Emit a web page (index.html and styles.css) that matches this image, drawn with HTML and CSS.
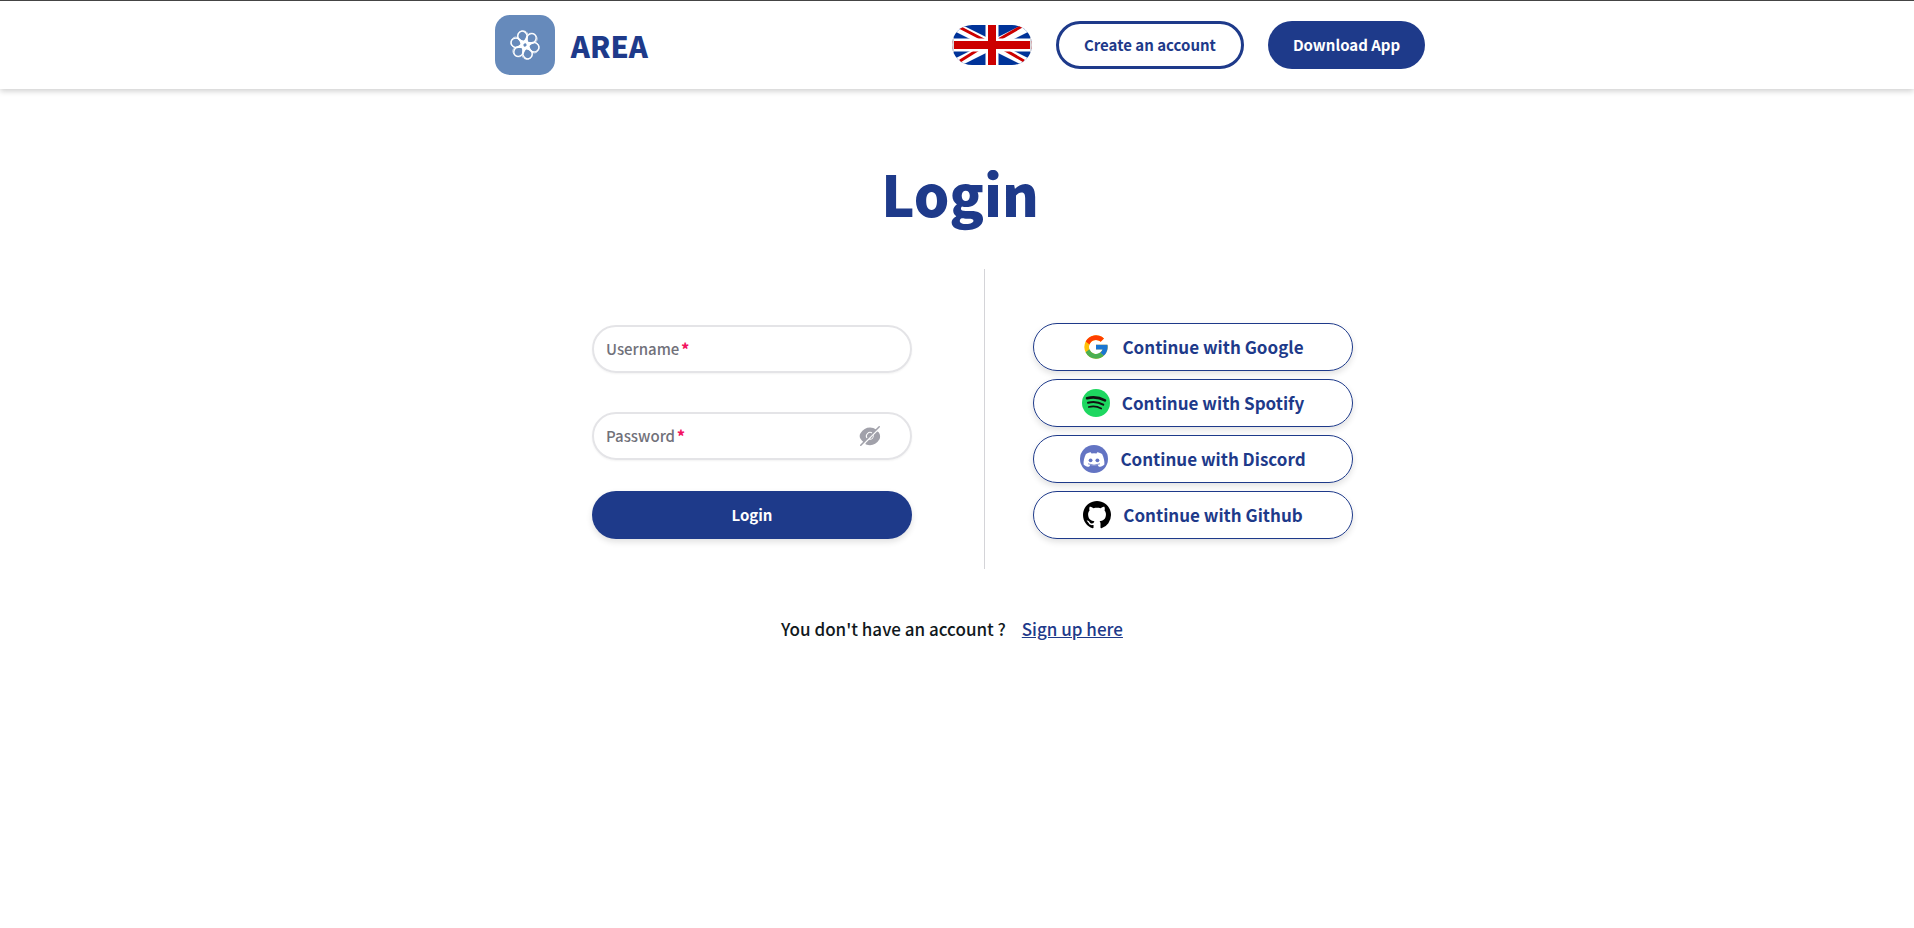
FILE: index.html
```html
<!DOCTYPE html>
<html lang="en">
<head>
<meta charset="utf-8">
<meta name="viewport" content="width=device-width, initial-scale=1">
<title>AREA - Login</title>
<link rel="stylesheet" href="styles.css">
</head>
<body>
<header class="header">
  <a class="brand" href="#">
    <svg class="logo" viewBox="0 0 60 60" aria-hidden="true">
      <rect width="60" height="60" rx="15" fill="#668abb"/>
      <g transform="translate(30 30) rotate(-16)" fill="none" stroke="#fff">
        <g id="petal">
          <ellipse cx="0" cy="-9" rx="4.600" ry="5.200" stroke-width="1.300"/>
          <path d="M-1-2C-8-8-5-15 1-14.500C8-13 6-7 1-2" stroke-width=".7"/>
          <path d="M-2-1L-5-8L0-4.500L5-8L2-1" fill="#fff" stroke="none"/>
        </g>
        <use href="#petal" transform="rotate(60)"/>
        <use href="#petal" transform="rotate(120)"/>
        <use href="#petal" transform="rotate(180)"/>
        <use href="#petal" transform="rotate(240)"/>
        <use href="#petal" transform="rotate(300)"/>
        <circle r="2.600" stroke-width="2" fill="#668abb"/>
      </g>
    </svg>
    <span class="brand-name">AREA</span>
  </a>
  <nav class="actions">
    <button class="language" type="button" aria-label="Language: English">
      <svg class="flag" viewBox="0 0 80 40" aria-hidden="true">
        <defs>
          <clipPath id="pill"><rect width="80" height="40" rx="20"/></clipPath>
        </defs>
        <g clip-path="url(#pill)">
          <path d="M0 0h80v40H0z" fill="#039"/>
          <path d="M0 0l80 40M80 0L0 40" stroke="#fff" stroke-width="9"/>
          <path d="M5 1l27 14M72 0L46 15M8 36l24-15M46 21l26 15" stroke="#c00" stroke-width="3"/>
          <path d="M40 0v40M0 20h80" stroke="#fff" stroke-width="13"/>
          <path d="M40 0v40M0 20h80" stroke="#c00" stroke-width="8"/>
          <path d="M0 0h2v40H0zM78 0h2v40h-2z" fill="#d8d8dc"/>
        </g>
      </svg>
    </button>
    <button class="pill outline" type="button">Create an account</button>
    <button class="pill solid" type="button">Download App</button>
  </nav>
</header>
<main class="page">
  <h1 class="title">Login</h1>
  <div class="methods">
    <form class="credentials">
      <div class="field">
        <label for="username">Username<span class="required">*</span></label>
        <input id="username" type="text" autocomplete="username" required>
      </div>
      <div class="field">
        <label for="password">Password<span class="required">*</span></label>
        <input id="password" type="password" autocomplete="current-password" required>
        <button class="reveal" type="button" aria-label="Show password">
          <svg class="eye" viewBox="0 0 24 24" fill="#a1a1aa" aria-hidden="true">
            <path d="M21.270 9.180c-.29-.46-.6-.89-.92-1.290a.96.96 0 0 0-1.430-.08l-3.260 3.260a3.840 3.840 0 0 1-4.600 4.600L7.800 18.920a.96.96 0 0 0 .28 1.560c1.250.52 2.570.79 3.920.79 3.630 0 7-2.120 9.300-5.730 1.070-1.680 1.050-4.720-.03-6.360z"/>
            <path d="M14.020 9.980l-4.040 4.040a2.860 2.860 0 1 1 4.040-4.040z"/>
            <path d="M18.250 5.750l-3.390 3.390a4.040 4.040 0 1 0-5.720 5.720l-3.380 3.390c-1.200-.84-2.300-1.960-3.260-3.430-1.090-1.680-1.090-4 0-5.680C4.800 5.350 8.300 3.500 12 3.500c2.240 0 4.370.8 6.250 2.250z"/>
            <path d="M14.860 12A2.860 2.860 0 0 1 12 14.860l2.810-3.280z"/>
            <path d="M21.770 2.230a.75.75 0 0 0-1.070 0L2.230 20.690a.77.77 0 0 0 0 1.080.76.76 0 0 0 1.070 0L21.770 3.300a.76.76 0 0 0 0-1.070z"/>
          </svg>
        </button>
      </div>
      <button class="submit" type="submit">Login</button>
    </form>
    <div class="providers">
      <button class="provider" type="button">
        <svg class="icon" viewBox="4 4 48 48" aria-hidden="true">
          <path fill="#ffc107" d="M47.600 24.100H46V24H28v8h11.300A12 12 0 1 1 28 16c3.100 0 5.800 1.200 8 3l5.700-5.600A20 20 0 1 0 47.600 24.100z"/>
          <path fill="#ff3d00" d="M10.300 18.700l6.600 4.800A12 12 0 0 1 28 16c3.100 0 5.800 1.200 8 3l5.700-5.600A20 20 0 0 0 10.300 18.700z"/>
          <path fill="#4caf50" d="M28 48c5.200 0 9.900-2 13.400-5.200l-6.200-5.200A12 12 0 0 1 16.700 32l-6.500 5A20 20 0 0 0 28 48z"/>
          <path fill="#1976d2" d="M47.600 24.100H28v8h11.300a12 12 0 0 1-4.100 5.500l6.200 5.200C41 43.200 48 38 48 28c0-1.300-.1-2.700-.4-3.900z"/>
        </svg>
        Continue with Google
      </button>
      <button class="provider" type="button">
        <svg class="icon" viewBox="0 0 28 28" aria-hidden="true">
          <circle cx="14" cy="14" r="14" fill="#1ed760"/>
          <g fill="none" stroke="#111" stroke-linecap="round">
            <path d="M5 9.200q9.500-2.400 18 2.200" stroke-width="2.500"/>
            <path d="M6 13.800q8-2.200 15.200 1.900" stroke-width="2.100"/>
            <path d="M6.800 18q6.600-1.700 12.400 1.500" stroke-width="1.700"/>
          </g>
        </svg>
        Continue with Spotify
      </button>
      <button class="provider" type="button">
        <svg class="icon" viewBox="0 0 28 28" aria-hidden="true">
          <circle cx="14" cy="14" r="14" fill="#6374c3"/>
          <path fill="#fff" d="M10.800 7.200c-2 .2-3.800.9-5 2C4.200 12.300 3.400 16 3.600 19.400c1.500 1.600 3.300 2.300 5.500 2.400l1.200-1.700c2.500.6 5 .6 7.400 0l1.200 1.700c2.200-.1 4-.8 5.500-2.400.2-3.400-.6-7.100-2.200-10.200-1.200-1.100-3-1.800-5-2l-.7 1.200q-2.500-.4-5 0z"/>
          <circle cx="10.600" cy="15.300" r="1.900" fill="#6374c3"/>
          <circle cx="17.400" cy="15.300" r="1.900" fill="#6374c3"/>
          <path d="M8 18.800q6 2.800 12 0" fill="none" stroke="#6374c3" stroke-width=".8"/>
        </svg>
        Continue with Discord
      </button>
      <button class="provider" type="button">
        <svg class="icon" viewBox="0 0 16 16" aria-hidden="true">
          <path fill-rule="evenodd" d="M8 0C3.580 0 0 3.580 0 8c0 3.540 2.290 6.530 5.470 7.590.4.070.55-.17.55-.38 0-.19-.01-.82-.01-1.490-2.010.37-2.530-.49-2.690-.94-.09-.23-.48-.94-.82-1.130-.28-.15-.68-.52-.01-.53.63-.01 1.080.58 1.230.82.720 1.210 1.870.87 2.330.66.070-.52.28-.87.51-1.070-1.780-.2-3.640-.89-3.640-3.950 0-.87.31-1.590.82-2.150-.08-.2-.36-1.020.08-2.120 0 0 .67-.21 2.200.82.640-.18 1.320-.27 2-.27s1.360.09 2 .27c1.530-1.040 2.200-.82 2.200-.82.44 1.100.16 1.920.08 2.120.51.56.82 1.270.82 2.150 0 3.070-1.870 3.750-3.650 3.950.29.25.54.73.54 1.480 0 1.070-.01 1.930-.01 2.200 0 .21.15.46.55.38A8 8 0 0 0 16 8c0-4.420-3.580-8-8-8z"/>
        </svg>
        Continue with Github
      </button>
    </div>
  </div>
  <p class="signup">You don't have an account ? <a href="#">Sign up here</a></p>
</main>
</body>
</html>
```
FILE: styles.css
```css
* {
  box-sizing: border-box;
}

body {
  margin: 0;
  background: #fff;
  color: #11181c;
  font-family: "Noto Sans CJK SC", "Noto Sans", sans-serif;
  font-size: 15px;
  line-height: 24px;
}

button,
input {
  font: inherit;
  color: inherit;
}

button {
  padding: 0;
  border: 0;
  background: none;
  cursor: pointer;
}

.header {
  display: flex;
  align-items: center;
  justify-content: center;
  gap: 304px;
  height: 89px;
  padding-left: 6px;
  border-top: 1px solid #444;
  box-shadow: 0 2px 6px rgba(0, 0, 0, 0.2);
}

.brand {
  display: flex;
  align-items: center;
  gap: 16px;
  color: #1e3a8a;
  text-decoration: none;
}

.logo {
  width: 60px;
  height: 60px;
}

.brand-name {
  font-size: 29px;
  line-height: 36px;
  font-weight: 900;
}

.actions {
  display: flex;
  align-items: center;
  gap: 24px;
}

.flag {
  display: block;
  width: 80px;
  height: 40px;
}

.pill {
  height: 48px;
  padding: 0 25px;
  border-radius: 24px;
  font-weight: 700;
}

.outline {
  border: 3px solid #1e3a8a;
  color: #1e3a8a;
}

.solid {
  background: #1e3a8a;
  color: #fff;
}

.page {
  display: flex;
  flex-direction: column;
  align-items: center;
  padding: 74px 0 48px 6px;
}

.title {
  margin: 0 0 46px;
  color: #1e3a8a;
  font-size: 56px;
  line-height: 60px;
  font-weight: 900;
}

.methods {
  display: flex;
  align-items: stretch;
  height: 300px;
  padding-left: 25px;
}

.credentials {
  display: flex;
  flex-direction: column;
  width: 320px;
  margin-right: 72px;
  padding-top: 56px;
}

.field {
  display: flex;
  align-items: center;
  height: 48px;
  margin-bottom: 39px;
  padding: 0 28px 0 12px;
  border: 2px solid #e4e4e7;
  border-radius: 24px;
  box-shadow: 0 1px 2px rgba(0, 0, 0, 0.05);
  color: #71717a;
  font-weight: 500;
}

.field + .field {
  margin-bottom: 31px;
}

.required {
  margin-left: 2px;
  color: #f31260;
  font-weight: 900;
}

.field input {
  flex: 1;
  min-width: 0;
  border: 0;
  outline: 0;
  background: transparent;
}

.eye {
  display: block;
  width: 24px;
  height: 24px;
}

.submit {
  height: 48px;
  border-radius: 24px;
  background: #1e3a8a;
  color: #fff;
  font-weight: 700;
  box-shadow: 0 3px 6px rgba(0, 0, 0, 0.12);
}

.providers {
  display: flex;
  flex-direction: column;
  gap: 8px;
  padding-top: 54px;
  padding-left: 48px;
  border-left: 1px solid #d4d4d8;
}

.provider {
  display: flex;
  align-items: center;
  justify-content: center;
  gap: 12px;
  width: 320px;
  height: 48px;
  border: 1px solid #1e3a8a;
  border-radius: 24px;
  color: #1e3a8a;
  font-size: 17px;
  font-weight: 700;
  box-shadow: 0 3px 6px rgba(0, 0, 0, 0.12);
}

.icon {
  width: 28px;
  height: 28px;
}

.signup {
  margin: 46px 0 0;
  padding-right: 16px;
  font-size: 17px;
  line-height: 28px;
  font-weight: 500;
}

.signup a {
  margin-left: 12px;
  color: #1e3a8a;
}
```
